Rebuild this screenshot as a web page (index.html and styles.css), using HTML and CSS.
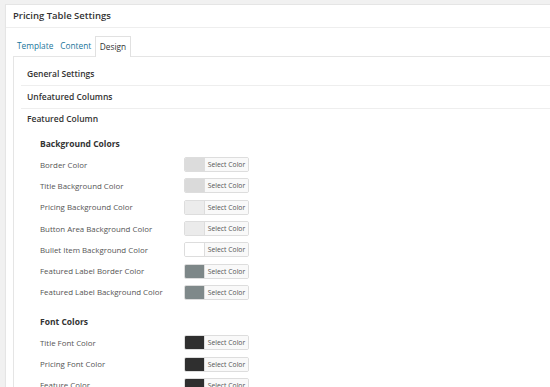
FILE: index.html
```html
<!DOCTYPE html>
<html lang="en">
<head>
    <meta charset="UTF-8">
    <title>Pricing Table Settings</title>
    <link rel="stylesheet" href="styles.css">
</head>
<body>
    <div class="postbox">
        <h2 class="postbox-title">Pricing Table Settings</h2>
        <div class="tabs">
            <a class="tab">Template</a>
            <a class="tab">Content</a>
            <a class="tab active">Design</a>
        </div>
        <div class="panel">
            <div class="section">General Settings</div>
            <div class="section">Unfeatured Columns</div>
            <div class="section open">Featured Column</div>
            <div class="section-body">
                <h3 class="group-title">Background Colors</h3>
                <div class="color-row"><span>Border Color</span><div class="picker"><i class="swatch" style="background:#dcdcdc"></i><button>Select Color</button></div></div>
                <div class="color-row"><span>Title Background Color</span><div class="picker"><i class="swatch" style="background:#dadada"></i><button>Select Color</button></div></div>
                <div class="color-row"><span>Pricing Background Color</span><div class="picker"><i class="swatch" style="background:#ececec"></i><button>Select Color</button></div></div>
                <div class="color-row"><span>Button Area Background Color</span><div class="picker"><i class="swatch" style="background:#ebebeb"></i><button>Select Color</button></div></div>
                <div class="color-row"><span>Bullet Item Background Color</span><div class="picker"><i class="swatch" style="background:#ffffff"></i><button>Select Color</button></div></div>
                <div class="color-row"><span>Featured Label Border Color</span><div class="picker"><i class="swatch" style="background:#7d8788"></i><button>Select Color</button></div></div>
                <div class="color-row"><span>Featured Label Background Color</span><div class="picker"><i class="swatch" style="background:#7f898a"></i><button>Select Color</button></div></div>

                <h3 class="group-title spaced">Font Colors</h3>
                <div class="color-row"><span>Title Font Color</span><div class="picker"><i class="swatch" style="background:#2f2f2f"></i><button>Select Color</button></div></div>
                <div class="color-row"><span>Pricing Font Color</span><div class="picker"><i class="swatch" style="background:#2f2f2f"></i><button>Select Color</button></div></div>
                <div class="color-row"><span>Feature Color</span><div class="picker"><i class="swatch" style="background:#2f2f2f"></i><button>Select Color</button></div></div>
            </div>
        </div>
    </div>
</body>
</html>
```

FILE: styles.css
```css
html, body {
    height: 100%;
}
body {
    margin: 0;
    background: #f1f1f1;
    font-family: "Open Sans", "Liberation Sans", sans-serif;
    color: #555;
    overflow: hidden;
}
.postbox {
    margin: 4px 0 0 5px;
    width: 600px;
    background: #fff;
    border: 1px solid #e5e5e5;
    box-shadow: 0 1px 1px rgba(0,0,0,0.04);
    height: 420px;
}
.postbox-title {
    margin: 0;
    height: 22px;
    line-height: 22px;
    padding-left: 7px;
    font-size: 9.5px;
    font-weight: 600;
    color: #333;
    border-bottom: 1px solid #eee;
}
.tabs {
    display: flex;
    align-items: flex-end;
    height: 28px;
    padding-left: 7px;
}
.tab {
    font-size: 8.3px;
    color: #21759b;
    padding: 0 3.5px;
    height: 20px;
    line-height: 19px;
}
.tab:first-child {
    padding-left: 4px;
}
.tab.active {
    color: #333;
    background: #fff;
    border: 1px solid #e1e1e1;
    border-bottom: none;
    padding: 0 4px;
    margin-bottom: -1px;
    position: relative;
}
.panel {
    margin-left: 7px;
    border-top: 1px solid #e5e5e5;
    border-left: 1px solid #e5e5e5;
    padding: 6px 0 0 7px;
}
.section {
    height: 22px;
    line-height: 22px;
    padding-left: 6px;
    font-size: 8.5px;
    font-weight: 600;
    color: #333;
    border-bottom: 1px solid #eee;
}
.section.open {
    height: 21px;
    line-height: 20px;
    border-bottom: none;
}
.section-body {
    padding: 3px 0 0 19px;
}
.group-title {
    margin: 0;
    height: 21px;
    line-height: 21px;
    font-size: 8.5px;
    font-weight: 700;
    color: #333;
}
.group-title.spaced {
    margin-top: 8px;
}
.color-row {
    display: grid;
    grid-template-columns: 144px auto;
    align-items: center;
    height: 21.3px;
    font-size: 7.9px;
}
.picker {
    display: flex;
    height: 15px;
    width: 65px;
    border: 1px solid #ddd;
    border-radius: 2px;
    box-sizing: border-box;
    overflow: hidden;
}
.swatch {
    width: 19px;
    border-right: 1px solid #ddd;
}
.picker button {
    flex: 1;
    border: none;
    background: #f9f9f9;
    font-family: inherit;
    font-size: 6.8px;
    color: #555;
    padding: 0;
}
```
